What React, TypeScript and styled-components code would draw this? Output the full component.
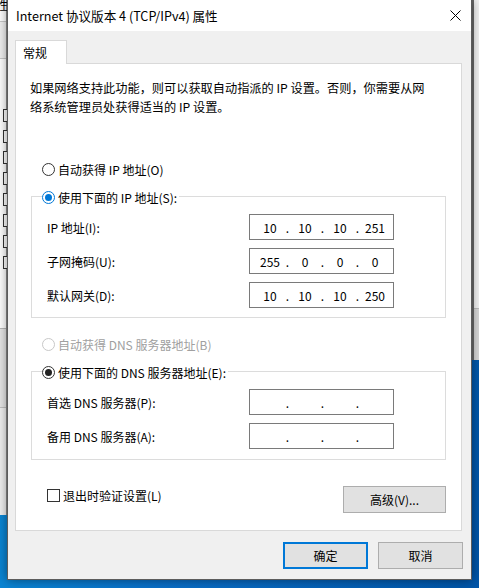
import React from 'react';
import styled, { createGlobalStyle } from 'styled-components';

const GlobalStyle = createGlobalStyle`
  html, body {
    margin: 0;
    padding: 0;
  }
  body {
    width: 479px;
    height: 588px;
    overflow: hidden;
    font-family: "Noto Sans CJK SC", "Noto Sans", sans-serif;
    font-size: 12px;
    color: #000;
  }
  * {
    box-sizing: border-box;
  }
`;

const Desktop = styled.div`
  position: relative;
  width: 479px;
  height: 588px;
  overflow: hidden;
  background: linear-gradient(100deg, #0a92da 0%, #0a6fc8 45%, #0055a8 100%);
`;

// windows behind the dialog
const BackWindow = styled.div`
  position: absolute;
  top: -12px;
  left: -200px;
  width: 207px;
  height: 527px;
  background: #f0f0f0;
  border-right: 1px solid #8a8a8a;
  display: flex;
  flex-direction: column;
`;

const BackHeader = styled.div`
  height: 34px;
  padding: 0 0 0 160px;
  display: flex;
  align-items: center;
  background: #fff;
  border-bottom: 1px solid #c8c8c8;
  white-space: nowrap;
`;

const BackList = styled.div`
  margin-top: 36px;
  background: #fff;
  border-top: 1px solid #c8c8c8;
  padding: 50px 0 0 203px;
  height: 270px;
  display: flex;
  flex-direction: column;
  gap: 8px;
`;

const BackCheck = styled.span`
  width: 13px;
  height: 13px;
  border: 1px solid #333;
  background: #fff;
`;

const BackFoot = styled.div`
  height: 80px;
  background: #e6e6e6;
  border-top: 1px solid #b8b8b8;
  border-bottom: 1px solid #c0c0c0;
`;

const RightWindow = styled.div`
  position: absolute;
  top: 0;
  left: 472px;
  width: 20px;
  height: 360px;
  background: #f3f3f3;
  border-left: 2px solid #6a6a6a;
  display: flex;
  flex-direction: column;
  justify-content: flex-end;
`;

const RightFoot = styled.div`
  height: 52px;
  background: #d9d9d9;
  border-top: 1px solid #bdbdbd;
`;

const Dialog = styled.div`
  position: absolute;
  left: 7px;
  top: 0;
  width: 465px;
  height: 580px;
  border: 1px solid #5c5c5c;
  border-top: none;
  box-shadow: 0 0 10px rgba(0, 0, 0, 0.45);
  display: flex;
  flex-direction: column;
  background: #f0f0f0;
`;

const TitleBar = styled.div`
  height: 31px;
  background: #fff;
  display: flex;
  align-items: center;
  padding: 0 10px 0 8px;
  justify-content: space-between;
`;

const Title = styled.span`
  font-size: 12.6px;
  white-space: nowrap;
`;

const Body = styled.div`
  flex: 1;
  padding: 9px 8px 10px 7px;
  display: flex;
  flex-direction: column;
`;

const TabStrip = styled.div`
  display: flex;
  position: relative;
  z-index: 1;
  margin-bottom: -1px;
`;

const Tab = styled.div`
  width: 52px;
  height: 24px;
  padding-left: 7px;
  display: flex;
  align-items: center;
  background: #fff;
  border: 1px solid #d9d9d9;
  border-bottom: none;
`;

const Panel = styled.div`
  background: #fff;
  border: 1px solid #d9d9d9;
  margin-right: 1px;
  padding: 15px 15px 17px 15px;
  display: flex;
  flex-direction: column;
`;

const Description = styled.p`
  margin: 0 0 0 -1px;
  line-height: 19px;
  font-size: 12.2px;
  white-space: nowrap;
`;

const RadioRow = styled.label<{ $top?: number; $disabled?: boolean }>`
  display: flex;
  align-items: center;
  gap: 3px;
  height: 20px;
  margin: ${(p) => p.$top ?? 0}px 0 0 11px;
  color: ${(p) => (p.$disabled ? '#a0a0a0' : '#000')};
  white-space: nowrap;
`;

const RadioDot = styled.span<{ $checked?: boolean; $tone?: 'blue' | 'dark'; $disabled?: boolean }>`
  width: 13px;
  height: 13px;
  border-radius: 50%;
  border: 1px solid
    ${(p) => (p.$disabled ? '#c8c8c8' : p.$tone === 'blue' && p.$checked ? '#0078d7' : '#333')};
  background: #fff;
  display: flex;
  align-items: center;
  justify-content: center;

  &::after {
    content: '';
    display: ${(p) => (p.$checked ? 'block' : 'none')};
    width: 7px;
    height: 7px;
    border-radius: 50%;
    background: ${(p) => (p.$tone === 'blue' ? '#0078d7' : '#222')};
  }
`;

const GroupBox = styled.div<{ $top: number; $bottom: number }>`
  margin-top: ${(p) => p.$top}px;
  border: 1px solid #dcdcdc;
  padding: 0 51px ${(p) => p.$bottom}px 15px;
  display: flex;
  flex-direction: column;
  gap: 8px;
`;

const Legend = styled.div`
  margin: -10px 0 -1px -5px;
  align-self: flex-start;
  background: #fff;
  padding-right: 2px;

  ${RadioRow} {
    margin: 0;
  }
`;

const FieldRow = styled.div`
  display: flex;
  align-items: center;
  justify-content: space-between;
  height: 26px;
`;

const FieldLabel = styled.span`
  white-space: nowrap;
`;

const IpBox = styled.div`
  width: 145px;
  height: 26px;
  border: 1px solid #7a7a7a;
  background: #fff;
  display: flex;
  align-items: center;
  padding-left: 5px;
`;

const Octet = styled.span`
  width: 30px;
  text-align: center;
`;

const Dot = styled.span`
  width: 5px;
  text-align: center;
`;

const BottomRow = styled.div`
  margin-top: 26px;
  display: flex;
  justify-content: space-between;
  align-items: flex-start;
`;

const CheckRow = styled.label`
  display: flex;
  align-items: center;
  gap: 3px;
  height: 18px;
  margin-left: 16px;
  white-space: nowrap;
`;

const CheckBox = styled.span`
  width: 13px;
  height: 13px;
  border: 1px solid #333;
  background: #fff;
`;

const Button = styled.button<{ $primary?: boolean; $w?: number }>`
  width: ${(p) => p.$w ?? 85}px;
  height: 27px;
  font: inherit;
  color: #000;
  background: #e1e1e1;
  border: ${(p) => (p.$primary ? '2px solid #0078d7' : '1px solid #adadad')};
  padding: 0;
  display: flex;
  align-items: center;
  justify-content: center;
`;

const Footer = styled.div`
  margin-top: 11px;
  display: flex;
  justify-content: flex-end;
  gap: 10px;
`;

function IpField({ value }: { value?: string[] }) {
  const parts = value ?? ['', '', '', ''];
  return (
    <IpBox>
      {parts.map((v, i) => (
        <React.Fragment key={i}>
          {i > 0 && <Dot>.</Dot>}
          <Octet>{v}</Octet>
        </React.Fragment>
      ))}
    </IpBox>
  );
}

function CloseIcon() {
  return (
    <svg width="11" height="11" viewBox="0 0 11 11">
      <path d="M0.5 0.5 L10.5 10.5 M10.5 0.5 L0.5 10.5" stroke="#000" strokeWidth="1" fill="none" />
    </svg>
  );
}

export default function App() {
  return (
    <>
      <GlobalStyle />
      <Desktop>
        <BackWindow>
          <BackHeader>连接属性</BackHeader>
          <BackList>
            {Array.from({ length: 8 }).map((_, i) => (
              <BackCheck key={i} />
            ))}
          </BackList>
          <BackFoot />
        </BackWindow>
        <RightWindow>
          <RightFoot />
        </RightWindow>

        <Dialog>
          <TitleBar>
            <Title>Internet 协议版本 4 (TCP/IPv4) 属性</Title>
            <CloseIcon />
          </TitleBar>
          <Body>
            <TabStrip>
              <Tab>常规</Tab>
            </TabStrip>
            <Panel>
              <Description>
                如果网络支持此功能，则可以获取自动指派的 IP 设置。否则，你需要从网
                <br />
                络系统管理员处获得适当的 IP 设置。
              </Description>

              <RadioRow $top={42}>
                <RadioDot />
                自动获得 IP 地址(O)
              </RadioRow>

              <GroupBox $top={17} $bottom={9}>
                <Legend>
                  <RadioRow>
                    <RadioDot $checked $tone="blue" />
                    使用下面的 IP 地址(S):
                  </RadioRow>
                </Legend>
                <FieldRow>
                  <FieldLabel>IP 地址(I):</FieldLabel>
                  <IpField value={['10', '10', '10', '251']} />
                </FieldRow>
                <FieldRow>
                  <FieldLabel>子网掩码(U):</FieldLabel>
                  <IpField value={['255', '0', '0', '0']} />
                </FieldRow>
                <FieldRow>
                  <FieldLabel>默认网关(D):</FieldLabel>
                  <IpField value={['10', '10', '10', '250']} />
                </FieldRow>
              </GroupBox>

              <RadioRow $top={16} $disabled>
                <RadioDot $disabled />
                自动获得 DNS 服务器地址(B)
              </RadioRow>

              <GroupBox $top={17} $bottom={10}>
                <Legend>
                  <RadioRow>
                    <RadioDot $checked $tone="dark" />
                    使用下面的 DNS 服务器地址(E):
                  </RadioRow>
                </Legend>
                <FieldRow>
                  <FieldLabel>首选 DNS 服务器(P):</FieldLabel>
                  <IpField />
                </FieldRow>
                <FieldRow>
                  <FieldLabel>备用 DNS 服务器(A):</FieldLabel>
                  <IpField />
                </FieldRow>
              </GroupBox>

              <BottomRow>
                <CheckRow>
                  <CheckBox />
                  退出时验证设置(L)
                </CheckRow>
                <Button $w={103}>高级(V)...</Button>
              </BottomRow>
            </Panel>
            <Footer>
              <Button $primary>确定</Button>
              <Button>取消</Button>
            </Footer>
          </Body>
        </Dialog>
      </Desktop>
    </>
  );
}
